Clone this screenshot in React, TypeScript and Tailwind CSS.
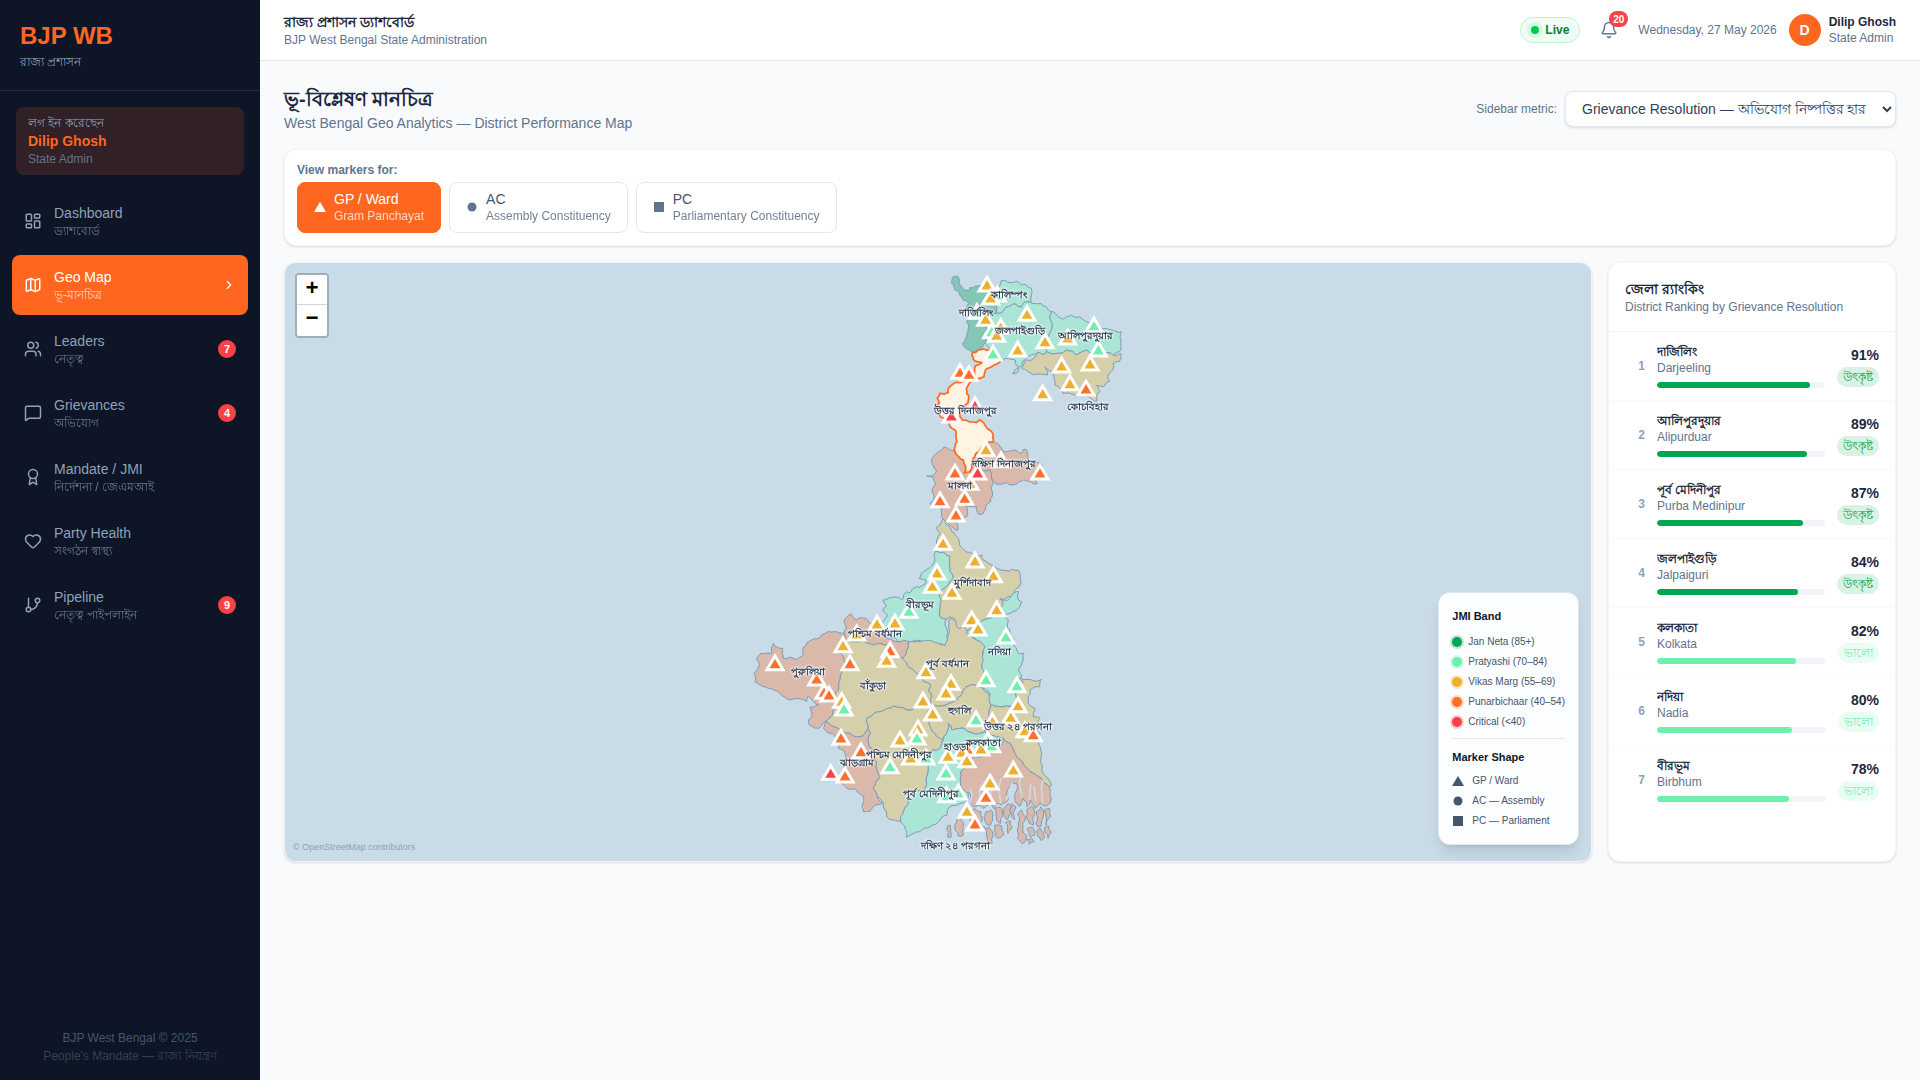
import {
  Award,
  Bell,
  ChevronRight,
  GitBranch,
  Heart,
  LayoutDashboard,
  Map,
  MessageSquare,
  Users
} from 'lucide-react'
import type { LucideIcon } from 'lucide-react'
import clsx from 'clsx'
import { useState } from 'react'

type Point = [number, number]
type Shape = 'triangle' | 'circle' | 'square'
type Band = 'jan' | 'pratyashi' | 'vikas' | 'punar' | 'critical'

interface NavItem {
  label: string
  bn: string
  icon: LucideIcon
  badge?: number
}

interface Region {
  x: number
  y: number
  areas: { fill: string; d: string; active?: boolean }[]
  markers: [Band, number, number][]
  labels: [string, number, number][]
}

const navItems: NavItem[] = [
  { label: 'Dashboard', bn: 'ড্যাশবোর্ড', icon: LayoutDashboard },
  { label: 'Geo Map', bn: 'ভূ-মানচিত্র', icon: Map },
  { label: 'Leaders', bn: 'নেতৃত্ব', icon: Users, badge: 7 },
  { label: 'Grievances', bn: 'অভিযোগ', icon: MessageSquare, badge: 4 },
  { label: 'Mandate / JMI', bn: 'নির্দেশনা / জেএমআই', icon: Award },
  { label: 'Party Health', bn: 'সংগঠন স্বাস্থ্য', icon: Heart },
  { label: 'Pipeline', bn: 'নেতৃত্ব পাইপলাইন', icon: GitBranch, badge: 9 }
]

const levels: { shape: Shape; label: string; sub: string }[] = [
  { shape: 'triangle', label: 'GP / Ward', sub: 'Gram Panchayat' },
  { shape: 'circle', label: 'AC', sub: 'Assembly Constituency' },
  { shape: 'square', label: 'PC', sub: 'Parliamentary Constituency' }
]

const bandColor: Record<Band, string> = {
  jan: '#00a650',
  pratyashi: '#6ef0ac',
  vikas: '#edb02e',
  punar: '#ff6f2c',
  critical: '#fb4148'
}

const legendBands = [
  { label: 'Jan Neta (85+)', dot: 'bg-[#00a650] ring-[#00a650]/25' },
  { label: 'Pratyashi (70–84)', dot: 'bg-[#6ef0ac] ring-[#6ef0ac]/25' },
  { label: 'Vikas Marg (55–69)', dot: 'bg-[#edb02e] ring-[#edb02e]/25' },
  { label: 'Punarbichaar (40–54)', dot: 'bg-[#ff6f2c] ring-[#ff6f2c]/25' },
  { label: 'Critical (<40)', dot: 'bg-[#fb4148] ring-[#fb4148]/25' }
]

const legendShapes: { shape: Shape; label: string }[] = [
  { shape: 'triangle', label: 'GP / Ward' },
  { shape: 'circle', label: 'AC — Assembly' },
  { shape: 'square', label: 'PC — Parliament' }
]

const ranking: [string, string, number][] = [
  ['দার্জিলিং', 'Darjeeling', 91],
  ['আলিপুরদুয়ার', 'Alipurduar', 89],
  ['পূর্ব মেদিনীপুর', 'Purba Medinipur', 87],
  ['জলপাইগুড়ি', 'Jalpaiguri', 84],
  ['কলকাতা', 'Kolkata', 82],
  ['নদিয়া', 'Nadia', 80],
  ['বীরভূম', 'Birbhum', 78],
  ['কালিম্পং', 'Kalimpong', 77],
  ['হাওড়া', 'Howrah', 75],
  ['হুগলি', 'Hooghly', 73],
  ['কোচবিহার', 'Cooch Behar', 71],
  ['পূর্ব বর্ধমান', 'Purba Bardhaman', 70],
  ['বাঁকুড়া', 'Bankura', 68],
  ['মুর্শিদাবাদ', 'Murshidabad', 66],
  ['উত্তর ২৪ পরগনা', 'North 24 Parganas', 64],
  ['পশ্চিম মেদিনীপুর', 'Paschim Medinipur', 62],
  ['পশ্চিম বর্ধমান', 'Paschim Bardhaman', 58],
  ['দক্ষিণ ২৪ পরগনা', 'South 24 Parganas', 55],
  ['মালদা', 'Malda', 52],
  ['দক্ষিণ দিনাজপুর', 'Dakshin Dinajpur', 50],
  ['ঝাড়গ্রাম', 'Jhargram', 47],
  ['পুরুলিয়া', 'Purulia', 44],
  ['উত্তর দিনাজপুর', 'Uttar Dinajpur', 38]
]

const DARK = '#84c7b4'
const MINT = '#aae5d6'
const TAN = '#d5cfaa'
const PINK = '#dbb9aa'

const regions: Region[] = [
  {
    x: 480,
    y: -6,
    areas: [
      {
        fill: DARK,
        d: '160,50 172,48 178,58 176,72 190,88 206,92 210,82 232,78 262,84 270,100 272,120 290,135 288,160 268,165 262,185 260,215 255,250 248,262 235,272 218,276 195,262 188,250 200,230 205,205 200,185 206,165 200,150 206,130 190,120 178,100 165,90 156,70'
      },
      {
        fill: MINT,
        d: '262,84 285,90 300,75 303,62 330,68 350,64 365,75 378,74 388,82 394,85 393,128 375,126 365,142 345,132 325,140 305,158 288,160 290,135 272,120 270,100'
      },
      {
        fill: MINT,
        d: '288,160 305,158 325,140 345,132 365,142 375,126 393,128 420,130 440,142 454,155 452,180 445,230 440,275 430,283 410,280 385,290 365,310 370,320 360,318 352,338 338,342 355,320 345,300 320,295 300,305 285,290 270,265 255,250 260,215 262,185 268,165'
      },
      {
        fill: MINT,
        d: '454,155 475,170 490,178 515,165 540,170 560,185 600,205 640,212 664,215 662,250 658,275 640,285 600,285 560,270 530,285 500,270 480,280 440,275 445,230 452,180'
      },
      {
        fill: TAN,
        d: '410,280 430,283 440,275 480,280 500,270 530,285 560,270 600,285 640,285 662,280 658,305 640,310 638,330 625,345 628,365 610,380 590,375 600,395 590,425 565,410 530,410 500,400 488,400 478,385 465,375 460,340 435,320 442,345 400,345 385,335 365,325 372,305 395,300'
      },
      {
        fill: PINK,
        d: '280,545 300,560 310,575 335,572 365,580 370,568 380,570 385,600 395,610 425,612 430,625 410,640 412,670 395,668 370,660 350,672 320,668 290,672 280,665 275,640 270,630 240,632 215,612 225,590 240,570 260,548'
      },
      {
        fill: PINK,
        d: '95,600 115,575 130,562 150,570 165,575 178,592 190,600 192,640 210,635 215,612 240,632 270,630 275,640 280,665 275,690 272,725 258,735 250,760 235,762 230,740 215,740 198,740 200,770 175,780 172,812 150,795 128,780 125,760 120,730 95,740 90,730 102,715 96,690 105,675 98,650 80,648 100,645 108,630'
      }
    ],
    markers: [
      ['pratyashi', 292, 128],
      ['vikas', 261, 98],
      ['vikas', 272, 137],
      ['pratyashi', 231, 180],
      ['pratyashi', 275, 238],
      ['vikas', 257, 201],
      ['vikas', 302, 225],
      ['vikas', 290, 249],
      ['pratyashi', 279, 305],
      ['vikas', 381, 186],
      ['vikas', 353, 293],
      ['vikas', 435, 268],
      ['vikas', 503, 257],
      ['pratyashi', 582, 220],
      ['pratyashi', 595, 293],
      ['vikas', 570, 335],
      ['vikas', 485, 341],
      ['vikas', 510, 394],
      ['punar', 558, 410],
      ['vikas', 428, 424],
      ['punar', 180, 360],
      ['punar', 207, 366],
      ['critical', 225, 460],
      ['critical', 154, 491],
      ['vikas', 303, 625],
      ['vikas', 258, 592],
      ['punar', 420, 662],
      ['punar', 165, 662],
      ['vikas', 210, 693],
      ['critical', 233, 662],
      ['punar', 120, 745],
      ['punar', 194, 738],
      ['punar', 168, 788]
    ],
    labels: [
      ['কালিম্পং', 326, 104],
      ['দার্জিলিং', 227, 158],
      ['জলপাইগুড়ি', 361, 213],
      ['আলিপুরদুয়ার', 555, 228],
      ['কোচবিহার', 565, 441],
      ['উত্তর দিনাজপুর', 196, 453],
      ['দক্ষিণ দিনাজপুর', 312, 611],
      ['মালদা', 181, 678]
    ]
  },
  {
    x: 480,
    y: 714,
    areas: [
      {
        fill: TAN,
        d: '120,75 128,58 140,75 155,95 175,115 192,150 215,160 245,165 265,190 290,205 315,212 335,208 356,212 358,260 345,270 330,290 300,295 310,310 300,330 290,345 250,360 215,380 195,395 172,385 165,360 150,350 138,358 118,345 120,310 118,285 125,270 150,245 158,225 148,200 150,170 135,160 106,155 110,120 120,100 108,85'
      },
      {
        fill: MINT,
        d: '106,155 135,160 150,170 148,200 158,225 150,245 125,270 118,285 120,310 118,345 138,358 135,375 143,420 135,436 115,430 80,425 60,422 30,425 -5,425 -45,410 -68,395 -52,365 -38,345 -52,330 -40,318 -50,300 -35,295 -15,290 5,300 20,275 30,278 45,262 70,255 80,240 58,235 70,215 85,205 100,190 104,175'
      },
      {
        fill: MINT,
        d: '195,395 215,380 250,360 290,345 300,330 310,310 300,295 320,302 335,285 355,275 355,300 365,305 350,330 330,340 312,346 325,360 330,400 345,440 355,460 372,460 370,480 355,510 365,525 355,545 345,570 350,600 340,620 300,620 272,615 270,580 250,565 245,545 253,520 245,495 248,465 255,440 240,425 205,405'
      }
    ],
    markers: [
      ['vikas', 129, 153],
      ['vikas', 111, 242],
      ['vikas', 97, 282],
      ['vikas', 280, 250],
      ['vikas', 156, 300],
      ['vikas', 225, 206],
      ['vikas', 290, 352],
      ['vikas', 215, 382],
      ['vikas', 234, 410],
      ['pratyashi', 318, 434],
      ['pratyashi', 27, 357]
    ],
    labels: [
      ['মুর্শিদাবাদ', 217, 250],
      ['নদিয়া', 297, 456]
    ]
  },
  {
    x: 0,
    y: 984,
    areas: [
      {
        fill: TAN,
        d: '623,150 628,120 630,85 645,90 655,115 668,108 680,130 700,145 720,155 735,170 728,195 725,225 733,250 725,275 730,295 690,285 670,300 650,330 620,345 570,345 575,320 565,300 572,285 540,255 520,240 500,220 488,205 500,180 505,155 540,155 560,152 595,160 615,166'
      },
      {
        fill: PINK,
        d: '312,95 335,72 350,90 375,85 390,100 412,105 412,125 435,140 475,155 505,155 500,180 488,205 465,195 440,165 400,165 380,160 345,155 315,150 312,130 318,115'
      },
      {
        fill: PINK,
        d: '42,250 60,225 50,210 62,190 95,190 100,160 112,172 128,175 130,205 170,208 190,195 192,170 215,150 245,135 285,125 312,130 315,150 290,180 310,200 305,240 300,270 295,300 285,320 285,345 272,380 255,395 235,415 212,408 205,390 215,375 210,352 235,345 205,318 200,335 150,330 120,310 85,295 60,285 45,275'
      },
      {
        fill: TAN,
        d: '315,150 345,155 380,160 400,165 440,165 465,195 488,205 500,220 520,240 540,255 572,285 565,300 575,320 570,345 535,340 515,360 460,348 430,362 395,378 380,385 385,415 360,440 345,440 310,425 280,410 255,395 272,380 285,345 285,320 295,300 300,270 305,240 310,200 290,180'
      },
      {
        fill: PINK,
        d: '255,395 280,410 310,425 345,440 360,440 385,415 392,430 388,470 405,495 410,520 420,560 400,595 410,610 428,640 400,650 390,665 370,665 368,640 372,620 350,600 320,595 305,580 300,560 320,545 310,515 315,490 295,475 290,445 270,430 250,415'
      },
      {
        fill: TAN,
        d: '395,378 430,362 460,348 515,360 535,340 570,345 565,390 575,420 590,440 612,440 600,475 560,490 565,530 560,580 550,605 515,600 505,640 490,665 482,695 460,690 440,680 430,640 410,610 400,595 420,560 410,520 405,495 388,470 392,430 385,415 380,385'
      },
      {
        fill: TAN,
        d: '570,345 620,345 650,330 670,300 690,285 730,295 745,310 752,345 748,380 740,400 735,425 700,430 635,420 625,400 612,440 605,450 590,440 575,420 565,390'
      },
      {
        fill: MINT,
        d: '612,440 625,400 635,420 700,430 735,425 770,440 780,470 760,480 700,500 680,520 662,545 662,590 680,600 685,620 660,640 630,650 600,690 570,710 540,725 500,742 495,715 482,695 490,665 505,640 515,600 550,605 560,580 565,530 560,490 600,475'
      },
      {
        fill: TAN,
        d: '752,345 780,350 820,350 830,330 838,290 850,275 835,265 870,268 905,268 900,290 870,300 865,340 885,355 880,380 900,385 885,410 900,430 895,455 905,490 905,540 935,585 928,590 905,565 870,545 850,520 830,500 810,460 790,445 770,440 735,425 740,400 748,380'
      },
      {
        fill: PINK,
        d: '790,445 810,460 830,500 850,520 870,545 905,565 928,590 930,640 915,648 900,640 885,655 872,630 860,650 848,625 838,650 825,625 830,580 812,575 805,625 785,645 770,640 760,655 748,630 730,655 715,645 700,650 690,610 662,590 662,545 680,520 700,500 760,480 780,470'
      },
      {
        fill: PINK,
        d: '650,690 660,680 672,700 670,735 655,738 645,720'
      },
      {
        fill: PINK,
        d: '688,660 705,655 722,665 720,700 735,712 722,722 700,715 690,690'
      },
      { fill: PINK, d: '738,665 752,660 758,690 748,708 736,695' },
      { fill: PINK, d: '736,715 748,712 760,735 756,762 742,755' },
      { fill: PINK, d: '764,655 780,652 790,675 782,700 770,690' },
      { fill: PINK, d: '765,705 785,708 790,735 775,745 764,725' },
      { fill: PINK, d: '792,655 806,640 812,670 800,690' },
      { fill: PINK, d: '796,698 810,692 816,715 804,730' },
      { fill: PINK, d: '816,640 828,650 824,690 814,680' },
      {
        fill: PINK,
        d: '832,672 845,660 856,680 848,720 860,740 848,762 832,745 836,710'
      },
      { fill: PINK, d: '860,660 875,648 884,670 880,705 868,700' },
      { fill: PINK, d: '862,715 878,712 885,735 872,742' },
      { fill: PINK, d: '888,665 902,650 910,680 900,712 888,700' },
      { fill: PINK, d: '912,662 928,655 932,680 918,705' },
      { fill: PINK, d: '890,722 902,716 915,740 904,752' },
      { fill: PINK, d: '914,712 926,708 934,728 924,745' },
      { fill: PINK, d: '860,748 875,745 882,755 868,762' },
      { fill: PINK, d: '620,715 630,705 634,740 624,742' }
    ],
    markers: [
      ['vikas', 411, 125],
      ['vikas', 465, 122],
      ['vikas', 350, 155],
      ['vikas', 309, 190],
      ['punar', 105, 244],
      ['punar', 330, 244],
      ['punar', 450, 205],
      ['vikas', 440, 234],
      ['punar', 230, 290],
      ['punar', 252, 330],
      ['punar', 267, 338],
      ['vikas', 305, 357],
      ['pratyashi', 312, 380],
      ['vikas', 558, 268],
      ['vikas', 633, 303],
      ['vikas', 618, 332],
      ['pratyashi', 738, 292],
      ['pratyashi', 831, 310],
      ['vikas', 834, 370],
      ['vikas', 812, 405],
      ['vikas', 549, 356],
      ['vikas', 578, 395],
      ['pratyashi', 708, 412],
      ['vikas', 757, 418],
      ['vikas', 855, 445],
      ['punar', 880, 457],
      ['vikas', 534, 440],
      ['vikas', 480, 473],
      ['pratyashi', 531, 467],
      ['vikas', 512, 527],
      ['pratyashi', 558, 527],
      ['pratyashi', 450, 553],
      ['punar', 303, 467],
      ['punar', 363, 508],
      ['critical', 272, 573],
      ['punar', 315, 581],
      ['pratyashi', 743, 475],
      ['pratyashi', 755, 490],
      ['punar', 682, 500],
      ['vikas', 665, 510],
      ['vikas', 723, 500],
      ['vikas', 624, 522],
      ['vikas', 681, 535],
      ['pratyashi', 618, 572],
      ['pratyashi', 620, 640],
      ['pratyashi', 655, 632],
      ['vikas', 750, 602],
      ['punar', 738, 645],
      ['vikas', 820, 563],
      ['vikas', 681, 687],
      ['punar', 705, 725]
    ],
    labels: [
      ['বীরভূম', 541, 45],
      ['পশ্চিম বর্ধমান', 405, 131],
      ['পূর্ব বর্ধমান', 622, 221],
      ['পুরুলিয়া', 203, 245],
      ['বাঁকুড়া', 399, 288],
      ['হুগলি', 657, 362],
      ['উত্তর ২৪ পরগনা', 834, 410],
      ['কলকাতা', 729, 458],
      ['হাওড়া', 650, 470],
      ['পশ্চিম মেদিনীপুর', 477, 494],
      ['ঝাড়গ্রাম', 352, 519],
      ['পূর্ব মেদিনীপুর', 574, 613],
      ['দক্ষিণ ২৪ পরগনা', 646, 768]
    ]
  }
]

// lowest ranked district, outlined on top of its neighbours
const weakest =
  '230,275 255,268 275,265 285,290 300,305 275,320 255,335 252,350 235,355 205,375 200,400 205,420 185,440 180,470 188,480 230,488 240,480 258,500 278,520 280,545 260,548 240,570 225,590 215,612 210,635 192,640 190,600 178,592 165,575 165,560 168,530 165,510 150,500 148,485 118,465 108,450 106,440 118,430 112,415 120,400 145,398 150,380 165,368 185,365 205,350 225,345 225,320 245,308 232,305 220,298 218,278'

// Splits an edge into small wobbly steps. The wobble depends only on the
// two end points, so districts that share an edge still line up.
function splitEdge(a: Point, b: Point, depth: number): Point[] {
  const dx = b[0] - a[0]
  const dy = b[1] - a[1]
  const length = Math.hypot(dx, dy)
  if (depth === 0 || length < 9) return [a]
  const swap = a[0] > b[0] || (a[0] === b[0] && a[1] > b[1])
  const seed = Math.sin((a[0] + b[0]) * 12.99 + (a[1] + b[1]) * 78.23) * 4375.5
  const shift = (seed - Math.floor(seed) - 0.5) * 0.34 * (swap ? -1 : 1)
  const mid: Point = [
    Math.round((a[0] + b[0]) / 2 - dy * shift),
    Math.round((a[1] + b[1]) / 2 + dx * shift)
  ]
  return [...splitEdge(a, mid, depth - 1), ...splitEdge(mid, b, depth - 1)]
}

function outline(d: string) {
  const points = d.split(' ').map((p) => p.split(',').map(Number) as Point)
  const rough = points.flatMap((p, i) =>
    splitEdge(p, points[(i + 1) % points.length], 2)
  )
  return rough.map((p) => p.join(',')).join(' ')
}

function ShapeIcon({ shape, className }: { shape: Shape; className?: string }) {
  return (
    <svg viewBox="0 0 12 12" className={clsx('shrink-0 fill-current', className)}>
      {shape === 'triangle' && <path d="M6 1 12 11H0Z" />}
      {shape === 'circle' && <circle cx="6" cy="6" r="4.5" />}
      {shape === 'square' && <path d="M1 1h10v10H1Z" />}
    </svg>
  )
}

function Sidebar() {
  return (
    <aside className="flex w-65 shrink-0 flex-col bg-[#0d1526]">
      <div className="border-b border-white/10 p-5">
        <p className="text-2xl font-bold text-[#ff6620]">BJP WB</p>
        <p className="mt-0.5 text-xs text-slate-400">রাজ্য প্রশাসন</p>
      </div>

      <div className="mx-4 mt-4 rounded-lg bg-[#ff6620]/15 px-3 py-2">
        <p className="text-xs text-slate-400">লগ ইন করেছেন</p>
        <p className="text-sm font-semibold text-[#ff6620]">Dilip Ghosh</p>
        <p className="text-xs text-slate-500">State Admin</p>
      </div>

      <nav className="mt-4 flex flex-1 flex-col gap-1 px-3">
        {navItems.map(({ label, bn, icon: Icon, badge }) => {
          const active = label === 'Geo Map'
          return (
            <a
              key={label}
              href="#"
              className={clsx(
                'flex items-center gap-3 rounded-lg p-3',
                active ? 'bg-[#ff6620] text-white' : 'text-slate-400'
              )}>
              <Icon className="size-[18px] shrink-0" />
              <span className="flex-1">
                <span className="block text-sm">{label}</span>
                <span className="block text-xs opacity-70">{bn}</span>
              </span>
              {badge && (
                <span className="flex size-[18px] items-center justify-center rounded-full bg-[#fb4148] text-[11px] font-bold text-white">
                  {badge}
                </span>
              )}
              {active && <ChevronRight className="size-3.5" />}
            </a>
          )
        })}
      </nav>

      <div className="p-4 text-center text-xs">
        <p className="text-slate-600">BJP West Bengal © 2025</p>
        <p className="mt-0.5 text-slate-700">People's Mandate — রাজ্য নিয়ন্ত্রণ</p>
      </div>
    </aside>
  )
}

function TopBar() {
  return (
    <header className="flex items-center justify-between border-b border-slate-200 bg-white px-6 py-3">
      <div>
        <p className="text-sm font-bold text-slate-800">রাজ্য প্রশাসন ড্যাশবোর্ড</p>
        <p className="text-xs text-slate-500">BJP West Bengal State Administration</p>
      </div>
      <div className="flex items-center gap-3">
        <span className="flex items-center gap-1.5 rounded-full border border-green-200 bg-green-50 px-2.5 py-1 text-xs font-semibold text-green-700">
          <span className="size-2 rounded-full bg-green-500 ring-4 ring-green-500/10" />
          Live
        </span>
        <button aria-label="Notifications" className="relative p-2 text-slate-500">
          <Bell className="size-[18px]" />
          <span className="absolute -top-0.5 -right-0.5 flex h-4 items-center rounded-full bg-[#fb4148] px-1 text-[10px] font-bold text-white">
            20
          </span>
        </button>
        <span className="text-xs text-slate-500">Wednesday, 27 May 2026</span>
        <div className="flex items-center gap-2">
          <span className="flex size-8 items-center justify-center rounded-full bg-[#ff6620] text-sm font-bold text-white">
            D
          </span>
          <div className="text-xs">
            <p className="font-semibold text-slate-800">Dilip Ghosh</p>
            <p className="text-slate-500">State Admin</p>
          </div>
        </div>
      </div>
    </header>
  )
}

function DistrictMap() {
  return (
    <svg
      viewBox="-6 3 1200 1794"
      className="absolute inset-0 size-full"
      role="img"
      aria-label="West Bengal districts">
      {regions.map((region, i) => (
        <g
          key={i}
          transform={`translate(${region.x} ${region.y})`}
          stroke="#7d9cb8"
          strokeWidth="3"
          strokeLinejoin="round">
          {region.areas.map((area) => (
            <polygon key={area.d} points={outline(area.d)} fill={area.fill} />
          ))}
        </g>
      ))}
      <polygon
        transform="translate(480 -6)"
        points={outline(weakest)}
        fill="#fff3e3"
        stroke="#ff6620"
        strokeWidth="5"
      />
      {/* tidal creeks of the delta */}
      <g transform="translate(0 984)" fill="none" stroke="#c8dbe6" strokeWidth="5">
        <path d="M688 645l8-30 -6-20M722 640l-4-35 6-20M752 630l4-40M782 640l-6-50 8-25M815 575l-6 30 -10 25M846 620l-8-40 6-30M868 630l4-50M888 635l-6-45M908 640l-4-50 6-20" />
      </g>
      {regions.map((region, i) => (
        <g
          key={i}
          transform={`translate(${region.x} ${region.y})`}
          stroke="#fff"
          strokeWidth="9">
          {region.markers.map(([band, x, y]) => (
            <path
              key={`${x}-${y}`}
              d={`M${x} ${y - 46}l24 41h-48Z`}
              fill={bandColor[band]}
            />
          ))}
        </g>
      ))}
      {regions.map((region, i) => (
        <g
          key={i}
          transform={`translate(${region.x} ${region.y})`}
          textAnchor="middle"
          className="fill-slate-700 text-[30px] font-semibold [filter:drop-shadow(0_0_3px_#fff)_drop-shadow(0_0_3px_#fff)]">
          {region.labels.map(([name, x, y]) => (
            <text key={name} x={x} y={y + 9}>
              {name}
            </text>
          ))}
        </g>
      ))}
    </svg>
  )
}

function MapLegend() {
  return (
    <div className="absolute right-3 bottom-4 rounded-xl border border-slate-200 bg-white/95 p-[13px] text-[10px] text-slate-600 shadow-lg">
      <p className="mb-1.5 text-[11px] leading-5 font-bold text-slate-900">JMI Band</p>
      <ul>
        {legendBands.map(({ label, dot }) => (
          <li key={label} className="flex h-5 items-center gap-1.5">
            <span className={clsx('size-2.5 rounded-full ring-2', dot)} />
            {label}
          </li>
        ))}
      </ul>
      <p className="mt-1.5 mb-1 border-t border-slate-200 pt-2 text-[11px] leading-5 font-bold text-slate-900">
        Marker Shape
      </p>
      <ul>
        {legendShapes.map(({ shape, label }) => (
          <li key={label} className="flex h-5 items-center gap-2">
            <ShapeIcon shape={shape} className="size-3" />
            {label}
          </li>
        ))}
      </ul>
    </div>
  )
}

function RankingPanel() {
  return (
    <section className="w-72 shrink-0 overflow-hidden rounded-xl border border-slate-100 bg-white shadow-sm">
      <div className="border-b border-slate-100 p-4">
        <h2 className="text-sm font-bold text-slate-800">জেলা র‍্যাংকিং</h2>
        <p className="text-xs text-slate-500">District Ranking by Grievance Resolution</p>
      </div>
      <ol className="max-h-120 overflow-y-auto [&::-webkit-scrollbar]:w-1.5 [&::-webkit-scrollbar-thumb]:rounded-full [&::-webkit-scrollbar-thumb]:bg-slate-300 [&::-webkit-scrollbar-track]:bg-slate-100">
        {ranking.map(([bn, en, value], index) => (
          <li
            key={en}
            className="flex items-center gap-3 border-b border-slate-50 px-4 py-3">
            <span className="w-5 text-right text-xs font-bold text-slate-400">
              {index + 1}
            </span>
            <div className="min-w-0 flex-1">
              <p className="truncate text-xs font-semibold text-slate-800">{bn}</p>
              <p className="truncate text-xs text-slate-500">{en}</p>
              <div className="mt-1.5 h-1.5 overflow-hidden rounded-full bg-slate-100">
                <div
                  className={clsx(
                    'h-full rounded-full',
                    value > 82 ? 'bg-[#00a650]' : 'bg-[#6ef0ac]'
                  )}
                  style={{ width: `${value}%` }}
                />
              </div>
            </div>
            <div className="flex flex-col items-end">
              <span className="text-sm font-bold text-slate-800">{value}%</span>
              <span
                className={clsx(
                  'mt-0.5 rounded-full px-1.5 py-0.5 text-xs font-medium',
                  value > 82
                    ? 'bg-[#00a650]/15 text-[#00a650]'
                    : 'bg-[#6ef0ac]/15 text-[#6ef0ac]'
                )}>
                {value > 82 ? 'উৎকৃষ্ট' : 'ভালো'}
              </span>
            </div>
          </li>
        ))}
      </ol>
    </section>
  )
}

export default function App() {
  const [level, setLevel] = useState<Shape>('triangle')

  return (
    <div className="flex min-h-screen bg-slate-50 font-['Liberation_Sans',sans-serif]">
      <Sidebar />
      <div className="min-w-0 flex-1">
        <TopBar />
        <main className="flex flex-col gap-4 p-6">
          <div className="flex items-center justify-between">
            <div>
              <h1 className="text-xl font-bold text-slate-800">ভূ-বিশ্লেষণ মানচিত্র</h1>
              <p className="text-sm text-slate-500">
                West Bengal Geo Analytics — District Performance Map
              </p>
            </div>
            <div className="flex items-center gap-2">
              <label htmlFor="metric" className="text-xs text-slate-500">
                Sidebar metric:
              </label>
              <select
                id="metric"
                className="rounded-lg border border-slate-200 bg-white px-3 py-2 text-sm text-slate-700 shadow-sm">
                <option>Grievance Resolution — অভিযোগ নিষ্পত্তির হার</option>
              </select>
            </div>
          </div>

          <section className="rounded-xl border border-slate-100 bg-white p-3 shadow-sm">
            <p className="mb-1 text-xs font-semibold text-slate-500">View markers for:</p>
            <div className="flex gap-2">
              {levels.map(({ shape, label, sub }) => {
                const active = shape === level
                return (
                  <button
                    key={shape}
                    onClick={() => setLevel(shape)}
                    className={clsx(
                      'flex items-center gap-2 rounded-lg border px-4 py-2 text-left',
                      active
                        ? 'border-[#ff6620] bg-[#ff6620] text-white'
                        : 'border-slate-200 bg-white text-slate-600'
                    )}>
                    <ShapeIcon
                      shape={shape}
                      className={clsx('size-3', !active && 'text-slate-500')}
                    />
                    <span>
                      <span className="block text-sm leading-tight">{label}</span>
                      <span className="block text-xs leading-tight opacity-75">{sub}</span>
                    </span>
                  </button>
                )
              })}
            </div>
          </section>

          <div className="flex gap-4">
            <section className="relative h-150 min-w-0 flex-1 overflow-hidden rounded-xl border border-slate-100 bg-[#c8dbe6] shadow-sm">
              <DistrictMap />
              <div className="absolute top-2.5 left-2.5 flex flex-col divide-y divide-gray-300 overflow-hidden rounded-sm border-2 border-black/20 bg-clip-padding font-['Liberation_Mono',monospace] text-[22px] leading-[30px] font-bold text-black">
                <button aria-label="Zoom in" className="size-[30px] bg-white">
                  +
                </button>
                <button aria-label="Zoom out" className="h-[31px] w-[30px] bg-white">
                  −
                </button>
              </div>
              <p className="absolute bottom-1.5 left-2 text-[9px] text-slate-400">
                © OpenStreetMap contributors
              </p>
              <MapLegend />
            </section>
            <RankingPanel />
          </div>
        </main>
      </div>
    </div>
  )
}
